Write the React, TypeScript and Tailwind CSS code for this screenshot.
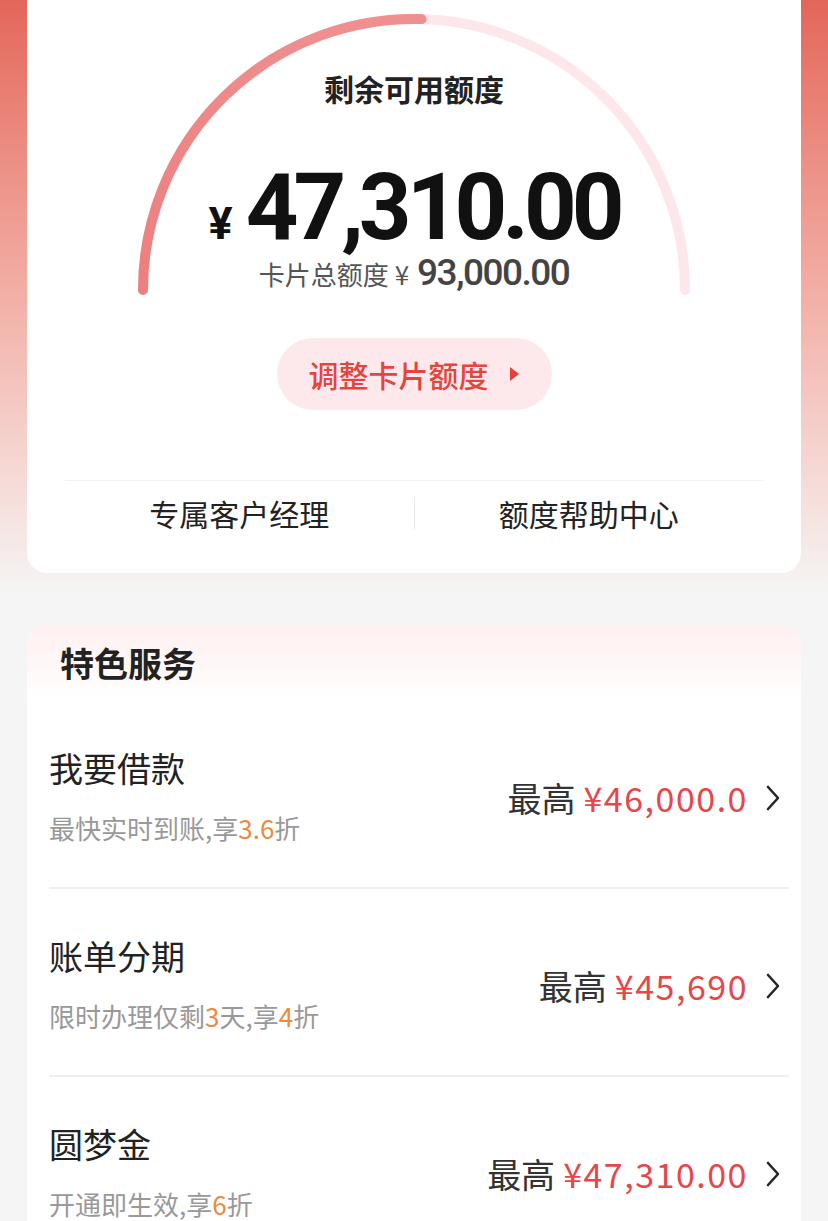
import React from "react";

const rows = [
  {
    title: "我要借款",
    sub: [
      { t: "最快实时到账,享", o: false },
      { t: "3.6", o: true },
      { t: "折", o: false },
    ],
    amount: "¥46,000.0",
  },
  {
    title: "账单分期",
    sub: [
      { t: "限时办理仅剩", o: false },
      { t: "3", o: true },
      { t: "天,享", o: false },
      { t: "4", o: true },
      { t: "折", o: false },
    ],
    amount: "¥45,690",
  },
  {
    title: "圆梦金",
    sub: [
      { t: "开通即生效,享", o: false },
      { t: "6", o: true },
      { t: "折", o: false },
    ],
    amount: "¥47,310.00",
  },
];

function Chevron() {
  return (
    <svg width="14" height="26" viewBox="0 0 14 26" className="shrink-0">
      <path
        d="M2 2 L12 13 L2 24"
        stroke="#262626"
        strokeWidth="2.6"
        fill="none"
        strokeLinecap="round"
        strokeLinejoin="round"
      />
    </svg>
  );
}

function Arc() {
  // card-local coordinates: center (387, 290), r = 271
  const cx = 387;
  const cy = 290;
  const r = 271;
  const theta = (91.6 * Math.PI) / 180;
  const ex = cx - r * Math.cos(theta);
  const ey = cy - r * Math.sin(theta);
  return (
    <svg
      className="pointer-events-none absolute left-0 top-0"
      width="775"
      height="300"
      viewBox="0 0 775 300"
    >
      <defs>
        <linearGradient id="pg" x1="0" y1="1" x2="0.6" y2="0">
          <stop offset="0%" stopColor="#ec7f80" />
          <stop offset="100%" stopColor="#ef8f8f" />
        </linearGradient>
      </defs>
      <path
        d={`M ${cx - r} ${cy} A ${r} ${r} 0 0 1 ${cx + r} ${cy}`}
        stroke="#fde7ea"
        strokeWidth="10"
        fill="none"
        strokeLinecap="round"
      />
      <path
        d={`M ${cx - r} ${cy} A ${r} ${r} 0 0 1 ${ex} ${ey}`}
        stroke="url(#pg)"
        strokeWidth="10"
        fill="none"
        strokeLinecap="round"
      />
    </svg>
  );
}

export default function App() {
  return (
    <div className="min-h-screen w-full bg-[#f5f5f5] font-['Noto_Sans_CJK_SC',sans-serif] text-[#222]">
      <div className="bg-linear-to-b from-[#e3665a] to-[#f5f5f5] to-95% px-[27px] pb-[52px]">
        <div className="rounded-b-[20px] bg-white">
          <div className="relative">
            <Arc />
            <div className="relative flex flex-col items-center pt-[70px]">
              <div className="text-[30px] font-bold leading-[36px] text-[#222]">
                剩余可用额度
              </div>
              <div className="mt-[60px] flex items-baseline font-['Roboto',sans-serif] font-bold text-[#111]">
                <span className="mr-[13px] text-[45px] leading-[40px]">¥</span>
                <span className="text-[92px] leading-[84px] tracking-[-5px]">
                  47,310.00
                </span>
              </div>
              <div className="mt-[4px] flex items-baseline text-[#555]">
                <span className="text-[26px] leading-none">卡片总额度</span>
                <span className="ml-[6px] text-[26px] leading-none">¥</span>
                <span className="ml-[8px] font-['Roboto',sans-serif] text-[37px] font-medium leading-none tracking-[-1.5px] text-[#444]">
                  93,000.00
                </span>
              </div>
              <div className="mt-[47px] flex h-[72px] items-center rounded-full bg-[#fde9eb] pl-[32px] pr-[32px]">
                <span className="text-[30px] font-medium leading-none text-[#e2463f]">
                  调整卡片额度
                </span>
                <svg width="10" height="14" viewBox="0 0 10 14" className="ml-[21px]">
                  <path d="M0 0 L9 7 L0 14 Z" fill="#e4403c" />
                </svg>
              </div>
            </div>
          </div>
          <div className="mx-[38px] mt-[70px] h-px bg-[#f2f2f2]" />
          <div className="mx-[38px] flex h-[64px] items-center text-[30px] leading-none text-[#222]">
            <div className="flex flex-1 justify-center">专属客户经理</div>
            <div className="h-[32px] w-px bg-[#e8e8e8]" />
            <div className="flex flex-1 justify-center">额度帮助中心</div>
          </div>
          <div className="h-[28px]" />
        </div>
      </div>

      <div className="mx-[27px] overflow-hidden rounded-t-[20px] bg-white">
        <div className="flex h-[76px] items-center bg-linear-to-b from-[#fff0f0] to-white pl-[33px] text-[34px] font-bold leading-none text-[#222]">
          特色服务
        </div>
        <div className="ml-[22px] mr-[12px]">
          {rows.map((r) => (
            <div
              key={r.title}
              className="flex h-[188px] items-center justify-between border-b-2 border-[#efefef] pt-[4px]"
            >
              <div className="flex flex-col">
                <div className="text-[34px] leading-[40px] text-[#222]">{r.title}</div>
                <div className="mt-[24px] text-[26px] leading-[32px] text-[#999]">
                  {r.sub.map((s, i) => (
                    <span key={i} className={s.o ? "text-[#ec8a3e]" : ""}>
                      {s.t}
                    </span>
                  ))}
                </div>
              </div>
              <div className="flex items-center pt-[4px]">
                <span className="text-[34px] leading-none text-[#333]">最高</span>
                <span className="ml-[8px] text-[34px] leading-none tracking-[1.5px] text-[#e5474b]">
                  {r.amount}
                </span>
                <span className="ml-[18px] mr-[9px] flex items-center">
                  <Chevron />
                </span>
              </div>
            </div>
          ))}
        </div>
      </div>
    </div>
  );
}
